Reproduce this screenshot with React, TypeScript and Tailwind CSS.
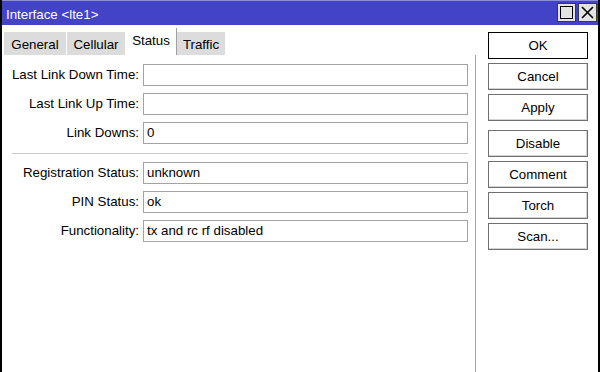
import React from 'react';

const FONT = "font-['Liberation_Sans',Arial,sans-serif]";

const TABS = [
  { label: 'General', w: 'w-[63px]' },
  { label: 'Cellular', w: 'w-[59px]' },
  { label: 'Status', w: 'w-[51px]', active: true },
  { label: 'Traffic', w: 'w-[49px]' },
];

const GROUP_A = [
  { label: 'Last Link Down Time:', value: '' },
  { label: 'Last Link Up Time:', value: '' },
  { label: 'Link Downs:', value: '0' },
];

const GROUP_B = [
  { label: 'Registration Status:', value: 'unknown' },
  { label: 'PIN Status:', value: 'ok' },
  { label: 'Functionality:', value: 'tx and rc rf disabled' },
];

function Field({ label, value }: { label: string; value: string }) {
  return (
    <>
      <div className="h-[22px] flex items-center justify-end leading-none">{label}</div>
      <div className="h-[22px] border border-[#a3a3a3] bg-white flex items-center px-[3px] leading-none">
        {value}
      </div>
    </>
  );
}

function Btn({ label, primary }: { label: string; primary?: boolean }) {
  return (
    <div
      className={
        'w-[100px] h-[27px] flex items-center justify-center bg-white leading-none ' +
        (primary ? 'border border-black' : 'border border-[#707070] shadow-[inset_-1px_-1px_0_#d4d4d4]')
      }
    >
      {label}
    </div>
  );
}

export default function App() {
  return (
    <div className={`w-[600px] h-[372px] bg-white text-[13.3px] text-black overflow-hidden flex flex-col border-x-2 border-black ${FONT}`}>
      {/* タイトルバー */}
      <div className="h-[25px] flex-shrink-0 bg-[#4343c7] border-t border-[#8d8de0] flex items-start justify-between">
        <div className="pl-[4px] pt-[6px] text-white leading-[16px]">Interface &lt;lte1&gt;</div>
        <div className="flex gap-[2px] pt-[2px] pr-[1px]">
          <div className="w-[19px] h-[19px] bg-[#e3e3e3] border border-[#3a3a3a] flex items-center justify-center">
            <div className="w-[13px] h-[13px] border-[1.5px] border-black" />
          </div>
          <div className="w-[19px] h-[19px] bg-[#e3e3e3] border border-[#3a3a3a] flex items-center justify-center">
            <svg width="13" height="13" viewBox="0 0 13 13">
              <path d="M1 1L12 12M12 1L1 12" stroke="#000" strokeWidth="1.6" />
            </svg>
          </div>
        </div>
      </div>

      <div className="flex-1 flex">
        {/* 左側 */}
        <div className="w-[473px] flex flex-col">
          <div className="h-[30px] flex items-end pl-[2px] pt-[2px]">
            {TABS.map((t) =>
              t.active ? (
                <div
                  key={t.label}
                  className={`${t.w} h-[27px] bg-white border-r border-[#a0a0a0] flex items-start justify-center pt-[6px] leading-none`}
                >
                  {t.label}
                </div>
              ) : (
                <div
                  key={t.label}
                  className={`${t.w} h-[23px] bg-[#dcdcdc] border-r border-white flex items-center justify-center pt-[2px] leading-none`}
                >
                  {t.label}
                </div>
              ),
            )}
          </div>

          <div className="pt-[9px] flex flex-col">
            <div className="grid grid-cols-[137px_325px] gap-x-[4px] gap-y-[7px]">
              {GROUP_A.map((f) => (
                <Field key={f.label} {...f} />
              ))}
            </div>
            <div className="ml-[10px] w-[456px] h-px bg-[#c8c8c8] mt-[9px] mb-[8px]" />
            <div className="grid grid-cols-[137px_325px] gap-x-[4px] gap-y-[7px]">
              {GROUP_B.map((f) => (
                <Field key={f.label} {...f} />
              ))}
            </div>
          </div>
        </div>

        {/* 区切り線 */}
        <div className="w-px bg-[#a6a6a6] mt-[30px]" />

        {/* ボタン */}
        <div className="pl-[12px] pt-[7px] flex flex-col">
          <div className="flex flex-col gap-[4px]">
            <Btn label="OK" primary />
            <Btn label="Cancel" />
            <Btn label="Apply" />
          </div>
          <div className="flex flex-col gap-[4px] mt-[9px]">
            <Btn label="Disable" />
            <Btn label="Comment" />
            <Btn label="Torch" />
            <Btn label="Scan..." />
          </div>
        </div>
      </div>
    </div>
  );
}
